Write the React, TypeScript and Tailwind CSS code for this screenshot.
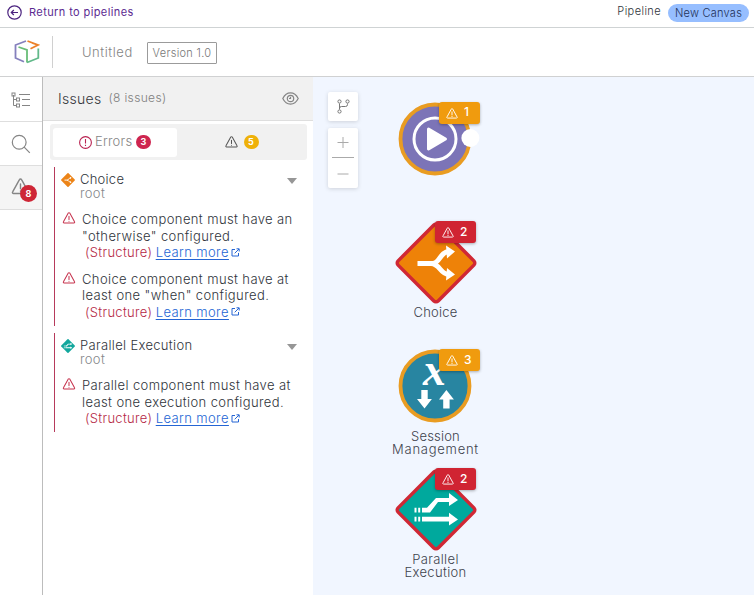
import React from "react";

function Triangle({ className }: { className: string }) {
  return (
    <svg viewBox="0 0 14 13" className={className} fill="none" stroke="currentColor" strokeLinejoin="round" strokeLinecap="round">
      <path d="M6.2 1.2a.9.9 0 0 1 1.6 0l5.2 9.4a.8.8 0 0 1-.7 1.3H1.7a.8.8 0 0 1-.7-1.3z" strokeWidth="1.1" />
      <path d="M7 4.6v3.6M7 9.9v.2" strokeWidth="1.1" />
    </svg>
  );
}

function ChoiceGlyph() {
  return (
    <g>
      <path d="M-18.500 .5h15C4 .5 4-11.500 13-11.500" fill="none" stroke="#fff" strokeWidth="5" />
      <path d="M-5 .5C4 .5 4 11.500 13 11.500" fill="none" stroke="#fff" strokeWidth="5" />
      <path d="M10-17.500 19-11.500 11-4.500zM11 5 19 11.500 10 17.500z" fill="#fff" />
    </g>
  );
}

function ParallelGlyph() {
  return (
    <g fill="#fff">
      <path d="M-14-2.200h5L0-12h13v-5l9 7-9 6v-4H2L-6 2.600h-8zM-14 6.800h27v-4l9 6.700-9 6v-4h-27z" />
      <path d="M-21.500-2.200h2v4.800h-2zM-17.800-2.200h2v4.800h-2zM-21.500 6.800h2v4.700h-2zM-17.800 6.800h2v4.700h-2z" />
    </g>
  );
}

function Diamond({ fill, children }: { fill: string; children: React.ReactNode }) {
  return (
    <svg viewBox="-42 -42 84 84" className="block h-[84px] w-[84px]">
      <rect x="-28.300" y="-28.300" width="56.600" height="56.600" rx="3" transform="rotate(45)" fill={fill} stroke="#d02835" strokeWidth="3.500" />
      {children}
    </svg>
  );
}

function Circle({ fill, children }: { fill: string; children: React.ReactNode }) {
  return (
    <svg viewBox="-42 -42 84 84" className="block h-[84px] w-[84px] overflow-visible">
      <circle r="34.500" fill={fill} stroke="#e99c22" strokeWidth="3.800" />
      {children}
    </svg>
  );
}

function Badge({ count, className }: { count: number; className: string }) {
  return (
    <div className={`absolute flex h-[22px] w-[41px] items-center rounded-[3px] pl-[7px] text-white shadow-[0_1px_3px_rgba(0,0,0,0.3)] ${className}`}>
      <Triangle className="mt-px h-[11px] w-[12px]" />
      <span className="-mt-px ml-[6px] text-[12px] font-medium leading-none">{count}</span>
    </div>
  );
}

function Issue({ lines }: { lines: string[] }) {
  return (
    <div className="flex pl-[7px]">
      <Triangle className="mt-[1px] h-[12px] w-[14px] shrink-0 text-[#c5304b]" />
      <div className="ml-[6px] whitespace-nowrap text-[13px] font-light leading-[16.500px] tracking-[0.390px] text-[#2f343b]">
        {lines.map((l) => (
          <div key={l}>{l}</div>
        ))}
        <div className="flex items-center pl-[3px]">
          <span className="tracking-[0.280px] text-[#b52746]">(Structure)</span>
          <span className="ml-[3.500px] text-[#2465d4] underline underline-offset-2">Learn more</span>
          <svg viewBox="0 0 9 9" className="ml-[2px] h-[9px] w-[9px]" fill="none" stroke="#2465d4">
            <path d="M4 1.500H1v6.500h6.500V5M5.500.800h2.700v2.700M8 1 3.700 5.300" />
          </svg>
        </div>
      </div>
    </div>
  );
}

function GroupHead({ title, color, children, className }: { title: string; color: string; children: React.ReactNode; className: string }) {
  return (
    <div className="flex pl-[5px]">
      <svg viewBox="-42 -42 84 84" className="mt-[5px] h-[16px] w-[16px]">
        <rect x="-27" y="-27" width="54" height="54" rx="4" transform="rotate(45)" fill={color} />
        {children}
      </svg>
      <div className="ml-[4px] mt-[5px] text-[13px] font-light leading-[14px]">
        <div className={`text-[#2f343b] ${className}`}>{title}</div>
        <div className="tracking-[0.350px] text-[#85878a]">root</div>
      </div>
      <div className="ml-auto mr-[16px] mt-[11px] h-0 w-0 border-x-[5px] border-t-[6px] border-x-transparent border-t-[#969696]" />
    </div>
  );
}

export default function App() {
  return (
    <div className="flex h-[595px] w-[754px] flex-col overflow-hidden bg-white font-['Inter',sans-serif] font-light text-[#2f343b]">
      <div className="flex h-[28px] shrink-0 border-b border-[#cfd3d4] pl-[7px] pr-[5px]">
        <svg viewBox="0 0 15 15" className="mt-[5px] h-[15px] w-[15px]" fill="none" stroke="#4b237f" strokeWidth="1.200">
          <circle cx="7.500" cy="7.500" r="6.700" />
          <path d="M11 7.500H4.500M6.800 5 4.300 7.500 6.800 10" />
        </svg>
        <div className="ml-[7px] mt-[5px] text-[11px] font-normal leading-[15px] tracking-[0.400px] text-[#5b2a91]">Return to pipelines</div>
        <div className="ml-auto mt-[4px] text-[11px] leading-[15px] tracking-[0.400px]">Pipeline</div>
        <div className="ml-[7px] mt-[4px] flex h-[18px] w-[81px] items-center justify-center rounded-full bg-[#96beff] text-[11px] tracking-[0.250px] text-[#1f3158]">New Canvas</div>
      </div>

      <div className="flex h-[49px] shrink-0 border-b border-[#d0d1d2]">
        <svg viewBox="0 0 26 26" className="ml-[14px] mt-[11px] h-[26px] w-[26px]" fill="none" strokeWidth="1.800">
          <path d="M12 2 1.500 6v13L10 22.800" stroke="#8580bd" />
          <path d="m13.500 2 10.500 4-7.500 3.700M18 4l6 2" stroke="#ec8229" />
          <path d="m4.500 8 8.500 3v12.500" stroke="#69bd78" />
          <path d="M13 23.500 24.300 19V9.500" stroke="#62b98a" />
        </svg>
        <div className="ml-[12px] mt-[8px] h-[32px] w-px bg-[#d0d0d0]" />
        <div className="ml-[29px] mt-[15px] w-[51px] text-[13px] leading-[18px] tracking-[0.550px] text-[#858585]">Untitled</div>
        <div className="ml-[14px] mt-[14px] flex h-[22px] w-[70px] items-center justify-center rounded-[1px] border border-[#9b9b9b] pt-px text-[11px] tracking-[0.300px] text-[#777]">Version 1.0</div>
      </div>

      <div className="flex min-h-0 flex-1">
        <div className="w-[43px] shrink-0 border-r border-[#bcbcbc] text-[#858585]">
          <div className="flex h-[45px] items-center justify-center border-b border-[#dedede] pt-[2px]">
            <svg viewBox="0 0 20 16" className="h-[16px] w-[20px]" fill="none" stroke="currentColor">
              <path d="M2.500 3v10.500H5M2.500 7.500H5M8 2.500h11M11 7.500h8M11 13.500h8" />
              <rect x="1" y="1" width="3" height="3" />
              <rect x="5.500" y="6" width="3" height="3" />
              <rect x="5.500" y="12" width="3" height="3" />
            </svg>
          </div>
          <div className="flex h-[44px] items-center justify-center border-b border-[#dedede]">
            <svg viewBox="0 0 20 20" className="h-[20px] w-[20px]" fill="none" stroke="currentColor" strokeWidth="1.200">
              <circle cx="8.200" cy="8.200" r="6.900" />
              <path d="m13.200 13.200 5.600 5.600" />
            </svg>
          </div>
          <div className="relative h-[44px] border-b border-[#dedede] bg-[#f5f5f5] pl-[11px] pt-[12px]">
            <Triangle className="h-[17px] w-[19px]" />
            <div className="absolute left-[20px] top-[19px] flex h-[17px] w-[17px] items-center justify-center rounded-full bg-[#ce2636] font-['Inter'] text-[9px] font-bold text-white">8</div>
          </div>
        </div>

        <div className="w-[270px] shrink-0">
          <div className="flex h-[44px] items-center border-b border-[#dedede] bg-[#f1f1f1] pl-[15px] pr-[14px]">
            <span className="-mt-px text-[14px] tracking-[0.300px] text-[#34363a]">Issues</span>
            <span className="-mt-px ml-[7px] text-[12px] tracking-[0.350px] text-[#808080]">(8 issues)</span>
            <svg viewBox="0 0 17 13" className="ml-auto h-[13px] w-[17px]" fill="none" stroke="#858585" strokeWidth="1.200">
              <path d="M.800 6.500C4.500-1 12.500-1 16.200 6.500 12.500 14 4.500 14 .800 6.500z" />
              <circle cx="8.500" cy="6.500" r="3.200" />
              <path d="M8.500 4.800v1.700H7" />
            </svg>
          </div>
          <div className="ml-[7px] mt-[3px] flex h-[36px] w-[257px] items-center rounded-[3px] bg-[#f1f1f1] px-[3px]">
            <div className="flex h-[29px] w-[124px] items-center rounded-[3px] bg-white pl-[26px]">
              <svg viewBox="0 0 13 13" className="h-[13px] w-[13px]" fill="none" stroke="#b92351" strokeWidth="1.100">
                <circle cx="6.500" cy="6.500" r="5.900" />
                <path d="M6.500 3v4.500M6.500 8.700v1.300" />
              </svg>
              <span className="ml-[3px] w-[41px] text-[13px] tracking-[0.200px] text-[#858585]">Errors</span>
              <span className="flex h-[14px] w-[15px] items-center justify-center rounded-full bg-[#ce254f] text-[9px] font-bold text-white">3</span>
            </div>
            <div className="flex flex-1 items-center justify-center pl-[2px]">
              <Triangle className="h-[12px] w-[13px] text-[#555]" />
              <span className="ml-[6px] flex h-[14px] w-[15px] items-center justify-center rounded-full bg-[#efb109] text-[9px] font-bold text-white">5</span>
            </div>
          </div>

          <div className="ml-[11px] mt-[7px] h-[159px] border-l border-[#b63a5b]">
            <GroupHead title="Choice" color="#ec8418" className="tracking-[0.250px]"><ChoiceGlyph /></GroupHead>
            <div className="mt-[11px]"><Issue lines={["Choice component must have an", '"otherwise" configured.']} /></div>
            <div className="mt-[10px]"><Issue lines={["Choice component must have at", 'least one "when" configured.']} /></div>
          </div>
          <div className="ml-[11px] mt-[7px] h-[99px] border-l border-[#b63a5b]">
            <GroupHead title="Parallel Execution" color="#12a79d" className="tracking-[0.330px]"><ParallelGlyph /></GroupHead>
            <div className="mt-[11px]"><Issue lines={["Parallel component must have at", "least one execution configured."]} /></div>
          </div>
        </div>

        <div className="relative flex-1 bg-[#f1f6ff] text-center text-[13px] leading-[13px] text-[#3e434d]">
          <div className="absolute left-[15px] top-[15px] flex h-[29px] w-[30px] items-center justify-center rounded-[2px] bg-white shadow-[0_1px_4px_rgba(0,0,0,0.15)]">
            <svg viewBox="0 0 13 15" className="h-[15px] w-[13px]" fill="none" stroke="#777">
              <circle cx="2.500" cy="2.500" r="1.600" /><circle cx="2.500" cy="12.500" r="1.600" /><circle cx="10.500" cy="2.500" r="1.600" />
              <path d="M2.500 4.500v6M10.500 4.500v1q0 2-2 2h-4q-2 0-2 2" />
            </svg>
          </div>
          <div className="absolute left-[15px] top-[51px] flex h-[60px] w-[30px] flex-col items-center rounded-[2px] bg-white shadow-[0_1px_4px_rgba(0,0,0,0.15)]">
            <svg viewBox="0 0 30 60" className="h-[60px] w-[30px]" stroke="#aaa">
              <path d="M9.500 14.500h11M15 9v11M4 29.500h22M9.500 46h11" />
            </svg>
          </div>

          <div className="absolute left-[80.400px] top-[20.300px]">
            <Circle fill="#7c74b7">
              <circle r="21" fill="none" stroke="#fff" strokeWidth="3" />
              <path d="M-6.500-10 10.500 0-6.500 10z" fill="#fff" stroke="#fff" strokeWidth="3" strokeLinejoin="round" />
              <circle cx="35.400" cy="-1" r="9" fill="#fff" stroke="none" />
            </Circle>
            <Badge count={1} className="left-[45.600px] top-[4.700px] bg-[#f09b0e]" />
          </div>

          <div className="absolute left-[80.500px] top-[143.500px]">
            <Diamond fill="#ee8208"><ChoiceGlyph /></Diamond>
            <Badge count={2} className="left-[41.500px] top-[.500px] bg-[#d02432]" />
          </div>
          <div className="absolute left-[72px] top-[229px] w-[101px] tracking-[0.200px]">Choice</div>

          <div className="absolute left-[80.400px] top-[267px]">
            <Circle fill="#2885a1">
              <text x="-12" y="-1" className="font-['Liberation_Serif'] text-[46px] font-bold italic" fill="#fff">x</text>
              <path d="M-13.700 4h6.400v9h4.200l-7.400 9.500-7.500-9.500h4.300zM8.200 22.500h6.400V13.500h4.300L11.400 4 4 13.500h4.200z" fill="#fff" />
            </Circle>
            <Badge count={3} className="left-[45.600px] top-[5px] bg-[#f09b0e]" />
          </div>
          <div className="absolute left-[67px] top-[353px] w-[111px]"><div className="tracking-[0.200px]">Session</div><div className="tracking-[0.750px]">Management</div></div>

          <div className="absolute left-[80.500px] top-[390.500px]">
            <Diamond fill="#00a99d"><ParallelGlyph /></Diamond>
            <Badge count={2} className="left-[41.500px] top-[.500px] bg-[#d02432]" />
          </div>
          <div className="absolute left-[67px] top-[476px] w-[111px] tracking-[0.350px]">Parallel<br />Execution</div>
        </div>
      </div>
    </div>
  );
}
